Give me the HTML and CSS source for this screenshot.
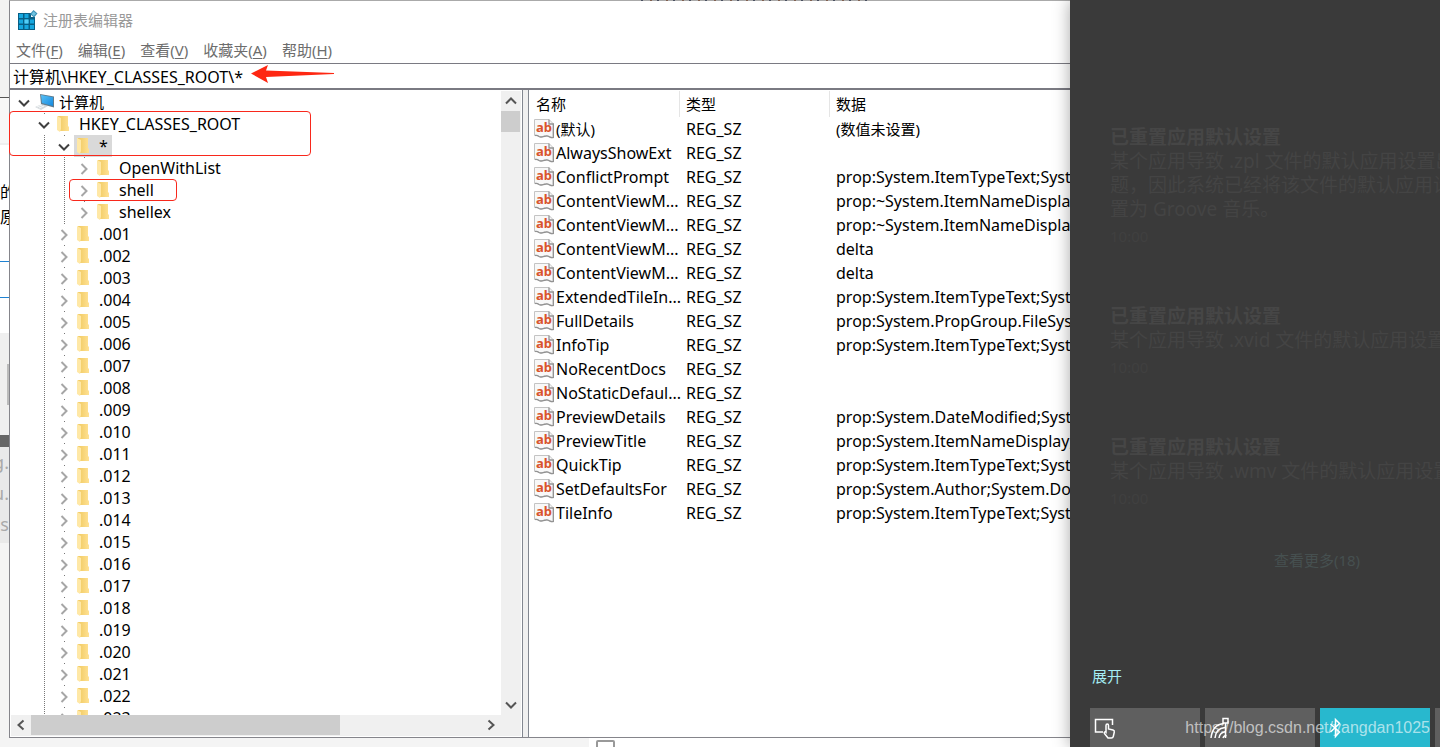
FILE: index.html
```html
<!DOCTYPE html>
<html lang="zh-CN">
<head>
<meta charset="utf-8">
<title>注册表编辑器</title>
<link rel="stylesheet" href="styles.css">
</head>
<body>
<svg class="defs" aria-hidden="true">
  <defs>
    <linearGradient id="gold" x1="0" x2="1"><stop offset="0" stop-color="#f0c95f"/><stop offset="1" stop-color="#ffe193"/></linearGradient>
    <linearGradient id="screen" x1="0" y1="0" x2="1" y2="1"><stop offset="0" stop-color="#58c2f7"/><stop offset="1" stop-color="#1689df"/></linearGradient>
  </defs>
  <symbol id="i-open" viewBox="0 0 20 22"><path d="M5 9.500l5 5 5-5" fill="none" stroke="#404040" stroke-width="2"/></symbol>
  <symbol id="i-closed" viewBox="0 0 20 22"><path d="M7.500 7l5 5-5 5" fill="none" stroke="#a6a6a6" stroke-width="2"/></symbol>
  <symbol id="i-folder" viewBox="0 0 20 22"><path d="M4 3h10v10l1 1v4H6z" fill="url(#gold)"/><path d="M3 3l4 2v11l-1 3-3-2z" fill="#ffe8a6"/></symbol>
  <symbol id="i-pc" viewBox="0 0 20 22"><path d="M1 16l7-3 6 2-7 4z" fill="#d5dadd"/><path d="M3 16l5-2M5 17l5-2" stroke="#f6f8f9"/><path d="M6 3l14 2.500v11L7 13z" fill="#607b8c"/><path d="M7 4l12 2.300v8.700L8 12z" fill="url(#screen)"/></symbol>
  <symbol id="i-value" viewBox="0 0 20 20"><path d="M.5 .5H15l4 4v14c-3 1-4-2-7-1.500-3 0-4 2-7 .5-2-1.500-3-1-4.500-1z" fill="#f8f8f8" stroke="#c4c4c4"/><path d="M15 .5v4.500h4.500v13.500c-3 1-4.500-2-7.500-1.500-3 0-4 2-7 .5-2-1.500-3-1-4-1" fill="none" stroke="#939393" stroke-width="1.300"/></symbol>
</svg>
<div class="screen">
  <aside class="behind-left" aria-hidden="true">
    <div class="bl-top"></div>
    <div class="bl-bar"></div>
    <div class="bl-text">的<br>原</div>
    <div class="bl-input"></div>
    <div class="bl-grey"><span></span></div>
    <div class="bl-dark"></div>
    <div class="bl-code"><span>g.</span><span>u.</span><span>.s</span></div>
  </aside>

  <div class="center">
    <main class="window">
      <i class="behind-top"></i>
      <header class="titlebar">
        <svg class="app-icon" viewBox="0 0 20 20"><path d="M0 3h13v4h4v13H0z" fill="#075f86"/><path d="M1 4h4v4H1zM6.500 4h4v4h-4zM1 9.500h4v4H1zM6.500 9.500h4v4h-4zM12 9.500h4v4h-4zM1 15h4v4H1zM6.500 15h4v4h-4zM12 15h4v4h-4z" fill="#16a7df"/><path d="M6.500 9.500h4v4h-4z" fill="#55cdf5"/><path d="M15.500 0L19.500 3.500 16 7.500 12 4z" fill="#3d91b6"/><path d="M15.500 1.500l2.500 2-2.200 2.500-2.300-2z" fill="#6fc3e2"/></svg>
        <h1>注册表编辑器</h1>
      </header>
      <nav class="menu">
        <button>文件(<u>F</u>)</button><button>编辑(<u>E</u>)</button><button>查看(<u>V</u>)</button><button>收藏夹(<u>A</u>)</button><button>帮助(<u>H</u>)</button>
      </nav>
      <div class="address">
        <input type="text" aria-label="地址" value="计算机\HKEY_CLASSES_ROOT\*">
        <svg class="arrow" viewBox="0 0 83 20"><path d="M0 9.500L17 1l-2 5.500L83 9v1L15 13l2 6z" fill="#fe2712"/></svg>
      </div>
      <div class="panes">
        <section class="tree-pane">
          <div class="tree-view"><ul class="tree" id="tree"></ul></div>
          <div class="vscroll">
            <button aria-label="向上"><svg viewBox="0 0 20 20"><path d="M5 12.500l5-5 5 5" /></svg></button>
            <div class="vthumb"></div>
            <button class="end" aria-label="向下"><svg viewBox="0 0 20 20"><path d="M5 7.500l5 5 5-5" /></svg></button>
          </div>
          <div class="hscroll">
            <button aria-label="向左"><svg viewBox="0 0 20 20"><path d="M12.500 5.500l-5 4.500 5 4.500" /></svg></button>
            <div class="hthumb"></div>
            <button class="end" aria-label="向右"><svg viewBox="0 0 20 20"><path d="M7.500 5.500l5 4.500-5 4.500" /></svg></button>
          </div>
          <div class="corner"></div>
          <i class="mark mark-root"></i>
          <i class="mark mark-shell"></i>
        </section>
        <div class="splitter"></div>
        <section class="list-pane">
          <table class="list">
            <colgroup><col class="c-name"><col class="c-type"><col></colgroup>
            <thead><tr><th>名称</th><th>类型</th><th>数据</th></tr></thead>
            <tbody id="values"></tbody>
          </table>
        </section>
      </div>
    </main>
    <div class="behind-bottom"><label><input type="checkbox" aria-label="选项"></label></div>
  </div>

  <aside class="action-center">
    <article class="notice">
      <h2>已重置应用默认设置</h2>
      <p>某个应用导致 .zpl 文件的默认应用设置出现问<br>题，因此系统已经将该文件的默认应用设<br>置为 Groove 音乐。</p>
      <time>10:00</time>
    </article>
    <article class="notice">
      <h2>已重置应用默认设置</h2>
      <p>某个应用导致 .xvid 文件的默认应用设置出现</p>
      <time>10:00</time>
    </article>
    <article class="notice">
      <h2>已重置应用默认设置</h2>
      <p>某个应用导致 .wmv 文件的默认应用设置出现</p>
      <time>10:00</time>
    </article>
    <a class="more" href="#">查看更多(18)</a>
    <button class="expand">展开</button>
    <div class="tiles">
      <button class="tile" aria-label="平板模式"><svg viewBox="0 0 22 22"><path d="M9 15H1.500V2.500h17V8M12 15V8.500c0-2 2.500-2 2.500 0V12l4.500 1c1 .3 1.500 1 1.300 2l-1 4.500c-.2 1-.8 1.500-2 1.500H14l-3.500-4.500c-.8-1.200.6-2.200 1.500-1.300z" fill="none" stroke="#fff" stroke-width="1.500"/></svg></button>
      <button class="tile" aria-label="网络"><svg viewBox="0 0 22 22"><path d="M2 21C3 12 8 7 15 6.500M6 21c.5-6 4-10 10-10.500M10 21c.5-4 3-6 7-6.500M14 21c.5-1.500 1.500-2.500 3.500-2.500" fill="none" stroke="#fff" stroke-width="1.500"/><path d="M14 1.500h5V6h-5zM16.500 6v15" fill="none" stroke="#fff" stroke-width="1.500"/></svg></button>
      <button class="tile on" aria-label="蓝牙"><svg viewBox="0 0 22 22"><path d="M6.500 7l9 8-4 4.500V2.500l4 4-9 8.500" fill="none" stroke="#fff" stroke-width="1.500"/></svg></button>
      <button class="tile" aria-label="更多"></button>
    </div>
    <div class="watermark">https://blog.csdn.net/yangdan1025</div>
  </aside>
</div>
<script src="script.js"></script>
</body>
</html>
```
FILE: styles.css
```css
* { box-sizing: border-box; }
body {
  margin: 0;
  font-family: "Noto Sans", "Noto Sans CJK SC", sans-serif;
  font-size: 15px;
  line-height: 22px;
  color: #000;
  background: #f4f4f4;
}
button, input { font: inherit; color: inherit; border: 0; padding: 0; margin: 0; background: none; }
h1, h2, p, ul { margin: 0; padding: 0; font-size: inherit; font-weight: 400; }
svg { display: block; }
.latin { font-size: 16px; }
.defs { position: absolute; width: 0; height: 0; }
.screen { display: flex; height: 100vh; overflow: hidden; }

/* page visible behind the window */
.behind-left { flex: 0 0 9px; overflow: hidden; background: #f4f4f4; font-size: 16px; line-height: 25px; }
.bl-top { height: 98px; background: #f2f2f2; border-bottom: 1px solid #555; }
.bl-bar { height: 47px; background: #f7f7f7; border-bottom: 2px solid #efefef; }
.bl-text { height: 116px; padding-top: 35px; background: #fff; }
.bl-input { height: 37px; border-top: 1px solid #1f82d2; border-bottom: 1px solid #1f82d2; background: #fff; }
.bl-grey { height: 137px; padding: 66px 0 0 7px; background: linear-gradient(#fff 35px, #efefef 35px); }
.bl-grey span { display: block; height: 41px; background: #bbb; }
.bl-dark { height: 12px; background: #666; }
.bl-code { display: flex; flex-direction: column; gap: 8px; height: 96px; padding-top: 4px; background: #e9e9e9; color: #aaa; font-size: 18px; line-height: 23px; align-items: flex-end; }
.behind-bottom { flex: 0 0 9px; padding: 2px 0 0 587px; overflow: hidden; background: linear-gradient(90deg, #f4f4f4 580px, #fff 580px); }
.behind-bottom input { appearance: none; display: block; width: 19px; height: 19px; border: 2px solid #999; border-radius: 2px; background: #fff; }
.behind-top { position: absolute; top: -1px; left: 631px; width: 228px; height: 1px; background: repeating-linear-gradient(90deg, #4a5060 0 2px, transparent 2px 9px, #806050 9px 11px, transparent 11px 16px); }

/* window */
.center { flex: 1; min-width: 0; display: flex; flex-direction: column; }
.window { position: relative; flex: 1; min-height: 0; display: flex; flex-direction: column; background: #fff; border: 1px solid #85858b; border-top-color: #aaa; border-right: 0; }
.titlebar { display: flex; align-items: center; gap: 5px; height: 37px; padding-left: 8px; color: #999; }
.app-icon { width: 20px; height: 20px; }
.menu { display: flex; gap: 15px; height: 25px; padding: 0 0 1px 6px; color: #6d6d6d; }
.menu u { text-underline-offset: 2px; }
.address { position: relative; height: 27px; border: solid #7a7a82; border-width: 1px 0 2px; }
.address input { display: block; width: 100%; height: 23px; padding-left: 3px; outline: 0; font-size: 16px; }
.arrow { position: absolute; left: 241px; top: 0; width: 83px; height: 20px; }
.panes { flex: 1; min-height: 0; display: flex; }

.tree-pane { position: relative; flex: 0 0 513px; display: grid; grid-template: minmax(0, 1fr) 21px / minmax(0, 1fr) 20px; padding: 1px; border-right: 1px solid #828790; }
.tree-view { overflow: hidden; }
.tree { list-style: none; padding-left: 3px; }
.row { display: flex; height: 22px; }
.guide { width: 20px; }
.guide.line { background: repeating-linear-gradient(#777 0 1px, transparent 1px 2px) 10px 0 / 1px 22px no-repeat; }
.toggle { width: 20px; height: 22px; background: linear-gradient(#777, #777) 10px 0 / 1px 1px no-repeat; }
.row:first-child .toggle { background: none; }
.toggle svg, .key svg { width: 20px; height: 22px; }
.key { display: flex; gap: 5px; padding-right: 4px; white-space: nowrap; }
.key.selected { background: #d9d9d9; }

.vscroll { display: flex; flex-direction: column; background: #f0f0f0; }
.hscroll { display: flex; background: #f0f0f0; }
.corner { background: #f0f0f0; }
.vscroll button, .hscroll button { width: 20px; height: 20px; }
.vscroll svg, .hscroll svg { fill: none; stroke: #555; stroke-width: 2; }
.vscroll .end { margin-top: auto; }
.hscroll .end { margin-left: auto; }
.vthumb { height: 21px; margin-right: 1px; background: #cdcdcd; }
.hthumb { width: 63%; margin-bottom: 1px; background: #cdcdcd; }
.mark { position: absolute; border: 1px solid #f8281c; border-radius: 4px; pointer-events: none; }
.mark-root { left: -1px; top: 21px; width: 302px; height: 45px; }
.mark-shell { left: 59px; top: 89px; width: 108px; height: 22px; }

.splitter { flex: 0 0 5px; background: #f0f0f0; }
.list-pane { flex: 1; min-width: 0; overflow: hidden; border-left: 1px solid #828790; padding-top: 1px; }
.list { width: 100%; table-layout: fixed; border-collapse: separate; border-spacing: 0; white-space: nowrap; }
.c-name, .c-type { width: 150px; }
.list th { height: 26px; padding: 0 0 0 6px; font-weight: 400; text-align: left; border-left: 1px solid #e5e5e5; }
.list th:first-child { border-left-color: transparent; }
.list td { height: 24px; padding: 0 0 0 7px; }
.list td:first-child { padding: 0 0 0 5px; }
.value { display: flex; align-items: center; gap: 2px; height: 24px; }
.value-icon { position: relative; flex: 0 0 20px; height: 20px; }
.value-icon svg { width: 20px; height: 20px; }
.value-icon b { position: absolute; inset: 0; text-align: center; color: #d9532c; font: 700 13px/16px "Noto Sans", sans-serif; }

/* notification panel */
.action-center { position: relative; flex: 0 0 370px; display: flex; flex-direction: column; padding: 125px 0 0 20px; background: #3a3a3a; box-shadow: 0 0 16px rgba(0, 0, 0, .35); white-space: nowrap; overflow: hidden; }
.notice { padding-left: 20px; margin-bottom: 56px; font-size: 19px; line-height: 24px; color: #444; }
.notice h2 { font-weight: 700; color: #464646; }
.notice time { display: block; margin-top: 3px; font-size: 15px; color: #404040; }
.more { align-self: center; margin: -17px 0 0 104px; color: #465050; text-decoration: none; }
.expand { align-self: flex-start; margin: auto 0 21px 2px; color: #a5edf4; }
.tiles { display: flex; gap: 5px; height: 39px; }
.tile { flex: 0 0 110px; padding: 9px 4px; background: #5f5f5f; }
.tile svg { width: 22px; height: 22px; }
.tile.on { background: #28b8ce; }
.watermark { position: absolute; right: 10px; bottom: 8px; font: 16px/22px "Liberation Sans", sans-serif; color: rgba(255, 255, 255, .62); }
```
FILE: script.js
```js
const icon = (name) => `<svg aria-hidden="true"><use href="#i-${name}"/></svg>`;
const label = (text) => /^[\x20-\x7e]*$/.test(text) ? `<span class="latin">${text}</span>` : `<span>${text}</span>`;

const keys = [
  [0, '计算机', true],
  [1, 'HKEY_CLASSES_ROOT', true],
  [2, '*', true],
  [3, 'OpenWithList'],
  [3, 'shell'],
  [3, 'shellex'],
];
for (let i = 1; i <= 23; i++) keys.push([2, '.' + String(i).padStart(3, '0')]);

document.getElementById('tree').innerHTML = keys.map(([depth, name, open]) => {
  let guides = '';
  for (let d = 0; d < depth; d++) guides += `<span class="guide${d ? ' line' : ''}"></span>`;
  return `<li class="row">${guides}<button class="toggle" aria-label="${open ? '折叠' : '展开'}">${icon(open ? 'open' : 'closed')}</button>` +
    `<button class="key${name === '*' ? ' selected' : ''}">${icon(depth ? 'folder' : 'pc')}${label(name)}</button></li>`;
}).join('');

const typeText = 'prop:System.ItemTypeText;System.Size';
const nameDisplay = 'prop:~System.ItemNameDisplay;System';
const values = [
  ['(默认)', '(数值未设置)'],
  ['AlwaysShowExt', ''],
  ['ConflictPrompt', typeText],
  ['ContentViewM...', nameDisplay],
  ['ContentViewM...', nameDisplay],
  ['ContentViewM...', 'delta'],
  ['ContentViewM...', 'delta'],
  ['ExtendedTileIn...', typeText],
  ['FullDetails', 'prop:System.PropGroup.FileSystem'],
  ['InfoTip', typeText],
  ['NoRecentDocs', ''],
  ['NoStaticDefaul...', ''],
  ['PreviewDetails', 'prop:System.DateModified;System.Size'],
  ['PreviewTitle', 'prop:System.ItemNameDisplay;System'],
  ['QuickTip', typeText],
  ['SetDefaultsFor', 'prop:System.Author;System.Document'],
  ['TileInfo', typeText],
];

document.getElementById('values').innerHTML = values.map(([name, data]) =>
  `<tr><td><div class="value"><span class="value-icon">${icon('value')}<b aria-hidden="true">ab</b></span>` +
  `${label(name)}</div></td><td>${label('REG_SZ')}</td><td>${label(data)}</td></tr>`).join('');
```
